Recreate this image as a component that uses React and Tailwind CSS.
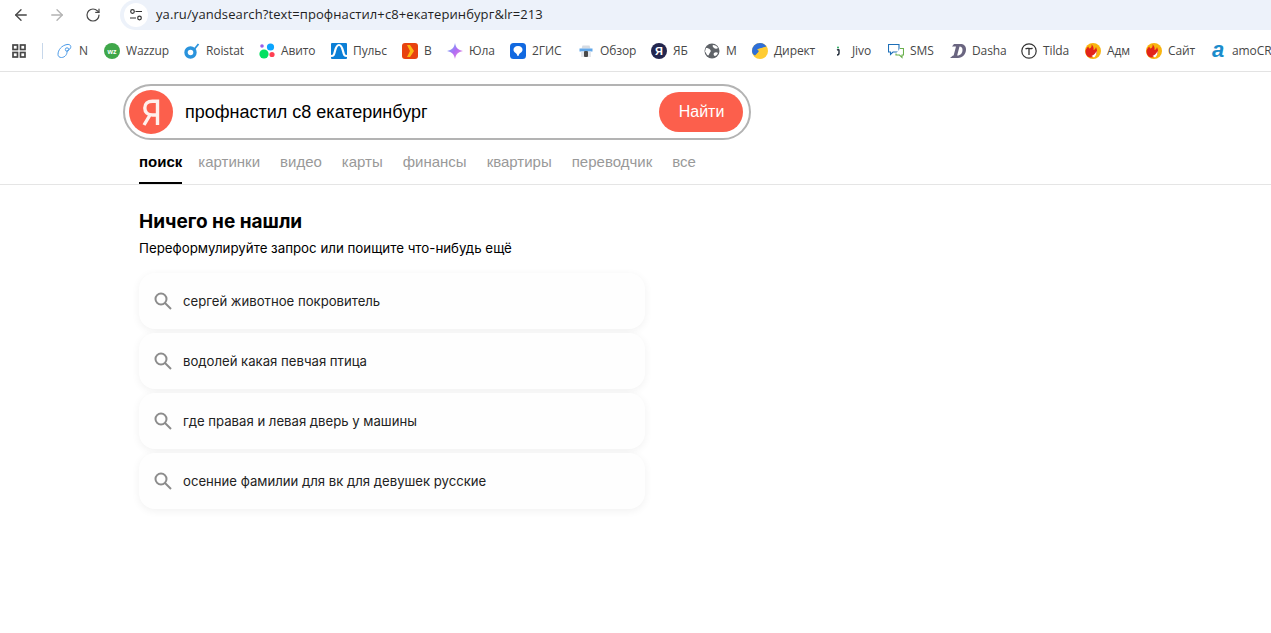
import React from 'react';
import { ArrowLeft, ArrowRight, RotateCw } from 'lucide-react';

const G = ({ children }) => (
  <svg width="16" height="16" viewBox="0 0 16 16" className="shrink-0">{children}</svg>
);

const FireIcon = () => (
  <G>
    <circle cx="8" cy="8" r="8" fill="#f9b50f" />
    <path d="M0.500 8c.500-2 1.500-3.500 3-4.500 0 2 1 2.500 2 1.500 1-1 1.500-2.500 1-4 1.500 2 2.500 3.500 2 6 1 0 2-1 2.500-3 1.500 3 1.500 6-.500 8.500-2 2-5 2.500-7 1.500C1.500 13 .300 10.500 .500 8z" fill="#e2231a" />
    <path d="M6.500 13c2-.500 4-2.500 5-5 .300 2.500-.500 5-2.500 6.500z" fill="#fff" />
  </G>
);

const bookmarks = [
  { label: 'N', w: 'w-[47px]', icon: (
    <G>
      <path d="M1 11.500C1 7 4.500 2.500 10 1.500c3-.500 4.500 1.500 3.500 3.500-.800 1.700-2.500 2-3.500 3 .500 3-2 6.500-5.500 6.500C2.500 14.500 1 13.500 1 11.500z" fill="none" stroke="#4c9be8" strokeWidth="1" />
      <circle cx="10" cy="6.500" r="1.700" fill="none" stroke="#4c9be8" strokeWidth="1" />
    </G>
  ) },
  { label: 'Wazzup', w: 'w-[80px]', icon: (
    <G>
      <circle cx="8" cy="8" r="8" fill="#3fa74a" />
      <text x="8" y="10.500" textAnchor="middle" fontSize="7" fontWeight="700" fill="#fff" fontFamily="Liberation Sans, sans-serif">wz</text>
    </G>
  ) },
  { label: 'Roistat', w: 'w-[75px]', icon: (
    <G>
      <circle cx="6.500" cy="9.500" r="4.500" fill="none" stroke="#2a93dc" strokeWidth="3.400" />
      <path d="M10.500 6l4-5" stroke="#2a93dc" strokeWidth="1.800" />
    </G>
  ) },
  { label: 'Авито', w: 'w-[72px]', icon: (
    <G>
      <circle cx="3" cy="3" r="1.800" fill="#965eeb" />
      <circle cx="11.500" cy="4" r="3.600" fill="#0aa5ff" />
      <circle cx="5" cy="11" r="4.600" fill="#04e061" />
      <circle cx="13" cy="11.500" r="2.600" fill="#ff4053" />
    </G>
  ) },
  { label: 'Пульс', w: 'w-[71px]', icon: (
    <G>
      <rect width="16" height="16" rx="1" fill="#0b7fd6" />
      <path d="M0 13c3 0 3-1 4-5 1-4 2-6 4-6s3 2 4 6c1 4 1 5 4 5" fill="none" stroke="#fff" strokeWidth="2.200" />
    </G>
  ) },
  { label: 'В', w: 'w-[45px]', icon: (
    <G>
      <rect width="16" height="16" rx="3" fill="#e8420f" />
      <path d="M5 2h3l4 6-4 6H5l3-6z" fill="#fdb813" />
    </G>
  ) },
  { label: 'Юла', w: 'w-[63px]', icon: (
    <G>
      <defs>
        <linearGradient id="ula" x1="0" y1="0" x2="1" y2="1">
          <stop offset="0" stopColor="#58c8f5" />
          <stop offset="0.500" stopColor="#b06cf5" />
          <stop offset="1" stopColor="#f78ad0" />
        </linearGradient>
      </defs>
      <path d="M8 0c1 5 3 7 8 8-5 1-7 3-8 8-1-5-3-7-8-8 5-1 7-3 8-8z" fill="url(#ula)" />
    </G>
  ) },
  { label: '2ГИС', w: 'w-[68px]', icon: (
    <G>
      <rect width="16" height="16" rx="3.500" fill="#1269e0" />
      <path d="M8 3c3 0 4.500 1.800 4.500 3.800 0 3-3.500 3-4 6.200h-1C7 9.800 3.500 9.800 3.500 6.800 3.500 4.800 5 3 8 3z" fill="#fff" />
    </G>
  ) },
  { label: 'Обзор', w: 'w-[73px]', icon: (
    <G>
      <path d="M3.500 5.500l1-3h7l1 3z" fill="#d5dbe3" />
      <rect x="1.500" y="5.500" width="13" height="3" fill="#62a8ea" />
      <rect x="3" y="8.500" width="10" height="5.500" fill="#e4e7ec" />
      <rect x="6" y="8" width="4" height="6" rx="1" fill="#4a4a4a" />
    </G>
  ) },
  { label: 'ЯБ', w: 'w-[53px]', icon: (
    <G>
      <circle cx="8" cy="8" r="8" fill="#23264e" />
      <text x="8" y="12" textAnchor="middle" fontSize="11" fontWeight="700" fill="#fff" fontFamily="Liberation Sans, sans-serif">Я</text>
    </G>
  ) },
  { label: 'М', w: 'w-[48px]', icon: (
    <G>
      <circle cx="8" cy="8" r="7.500" fill="#5f6368" />
      <path d="M2 5c2 0 3 .500 4 1.500s1 2 0 3-1 3-2 3-2-3-3-4zM9 2c2 0 4 1 5 3-1 1-3 1-4 0s-2-2-1-3zM10 10c1-1 3-1 4 0-1 2-2 3-3 3s-2-2-1-3z" fill="#fff" />
    </G>
  ) },
  { label: 'Директ', w: 'w-[78px]', icon: (
    <G>
      <circle cx="8" cy="8" r="8" fill="#fc3" />
      <path d="M0 8a8 8 0 0 1 8-8c3 0 5 1.500 6.500 3.500L6 6l1.500 2L3 12.500C1 12 0 10 0 8z" fill="#2f6fd8" />
      <path d="M14 4L5 6.500l2 1.500-3.500 6 1.500 1 5-5 1.500 1.500z" fill="#fc3" />
    </G>
  ) },
  { label: 'Jivo', w: 'w-[58px]', icon: (
    <G>
      <circle cx="8" cy="8" r="8" fill="#fff" />
      <circle cx="8" cy="4.500" r="1" fill="#26a65b" />
      <path d="M7 7c1-.500 2-.500 2 0v3c0 1.500-1 2-2 2" fill="none" stroke="#1f2937" strokeWidth="1.400" />
    </G>
  ) },
  { label: 'SMS', w: 'w-[62px]', icon: (
    <G>
      <path d="M.500 1.500h10.500v7.500H5l-2.500 2.500V9h-2z" fill="#fff" stroke="#1d6fb8" strokeWidth="1.100" />
      <path d="M12 5.500h3.500V12H14v2.500L11.500 12H8v-1.500" fill="#fff" stroke="#6ab04c" strokeWidth="1.100" />
    </G>
  ) },
  { label: 'Dasha', w: 'w-[71px]', icon: (
    <G>
      <path d="M4 1h6c4 0 6 2 6 5.500C16 11 12.500 15 8 15H0l3-2.500h4.500c3 0 5-2.500 5-5.500 0-2-1-3.500-3-3.500L7 13H3.500L6 3.500H2z" fill="#6a6580" />
    </G>
  ) },
  { label: 'Tilda', w: 'w-[64px]', icon: (
    <G>
      <circle cx="8" cy="8" r="7.200" fill="#fff" stroke="#333" strokeWidth="1.200" />
      <path d="M4.500 6c1-1 1.500-1 3.500-.500s2.500.500 3.500-.500M8 6v6" fill="none" stroke="#333" strokeWidth="1.300" />
    </G>
  ) },
  { label: 'Адм', w: 'w-[61px]', icon: <FireIcon /> },
  { label: 'Сайт', w: 'w-[64px]', icon: <FireIcon /> },
  { label: 'amoCR', w: 'w-[61px]', icon: (
    <G>
      <text x="8" y="14" textAnchor="middle" fontSize="22" fontWeight="700" fontStyle="italic" fill="#1b8ccb" fontFamily="Liberation Sans, sans-serif">a</text>
    </G>
  ) },
];

const tabs = ['картинки', 'видео', 'карты', 'финансы', 'квартиры', 'переводчик', 'все'];

const suggestions = [
  'сергей животное покровитель',
  'водолей какая певчая птица',
  'где правая и левая дверь у машины',
  'осенние фамилии для вк для девушек русские',
];

const App = () => {
  return (
    <div className="h-[633px] w-[1271px] overflow-hidden bg-white font-['Liberation_Sans',sans-serif]">
      {/* Панель браузера */}
      <div className="flex h-[30px] items-center bg-white pl-[12px]">
        <ArrowLeft size={18} strokeWidth={1.8} className="text-[#474747]" />
        <ArrowRight size={18} strokeWidth={1.8} className="ml-[18px] text-[#b3b3b3]" />
        <RotateCw size={16} strokeWidth={1.8} className="ml-[19px] text-[#474747]" />
        <div className="ml-[19px] flex h-[30px] flex-1 items-center rounded-l-full bg-[#edf2fa] pl-[4px]">
          <div className="flex h-[24px] w-[24px] items-center justify-center rounded-full bg-white">
            <svg width="14" height="14" viewBox="0 0 14 14" fill="none" stroke="#333" strokeWidth="1.200">
              <circle cx="3.500" cy="3.500" r="1.800" />
              <path d="M6.500 3.500H13M1 10h6" />
              <circle cx="10.500" cy="10" r="1.800" />
            </svg>
          </div>
          <span className="ml-[8px] font-['Open_Sans',sans-serif] text-[13px] tracking-[0.1px] text-[#1f1f1f]">
            ya.ru/yandsearch?text=профнастил+с8+екатеринбург&lr=213
          </span>
        </div>
      </div>

      {/* Закладки */}
      <div className="flex h-[42px] items-center overflow-hidden border-b border-[#e3e3e3] pl-[12px]">
        <svg width="14" height="14" viewBox="0 0 14 14" fill="none" stroke="#474747" strokeWidth="1.700" className="shrink-0">
          <rect x="1" y="1" width="4.500" height="4.500" />
          <rect x="8.500" y="1" width="4.500" height="4.500" />
          <rect x="1" y="8.500" width="4.500" height="4.500" />
          <rect x="8.500" y="8.500" width="4.500" height="4.500" />
        </svg>
        <div className="ml-[16px] mr-[14px] h-[16px] w-px shrink-0 bg-[#c7d7ea]" />
        {bookmarks.map((b) => (
          <div key={b.label} className={`flex shrink-0 items-center gap-[6px] ${b.w}`}>
            {b.icon}
            <span className="whitespace-nowrap font-['Open_Sans',sans-serif] text-[12px] tracking-[-0.1px] text-[#474747]">{b.label}</span>
          </div>
        ))}
      </div>

      {/* Поиск */}
      <div className="pl-[123px] pt-[12px]">
        <div className="flex h-[56px] w-[628px] items-center rounded-full border-[2px] border-[#b3b3b3] bg-white pl-[4px] pr-[6px]">
          <div className="flex h-[44px] w-[44px] items-center justify-center rounded-full bg-[#fc5f4c]">
            <svg width="20" height="28" viewBox="0 0 20 28" fill="none" stroke="#fff0ec" strokeWidth="3.400">
              <path d="M16.500 27V3.200h-5C6.500 3.200 3.800 6 3.800 10c0 4.200 2.700 7 7.700 7h5M9 17L3 27" />
            </svg>
          </div>
          <span className="ml-[12px] flex-1 text-[18px] text-black">профнастил с8 екатеринбург</span>
          <div className="flex h-[40px] w-[84px] items-center justify-center rounded-full bg-[#fc5f4c] pl-[1px] text-[16px] text-white">
            Найти
          </div>
        </div>
      </div>

      {/* Вкладки */}
      <div className="flex h-[45px] items-start gap-[20px] border-b border-[#e5e5e5] pl-[139px]">
        <div className="-mr-[4px] flex h-[44px] flex-col justify-center border-b-2 border-black pt-[2px] text-[15px] font-bold text-black">поиск</div>
        {tabs.map((t) => (
          <div key={t} className="flex h-[44px] items-center pt-[1px] text-[15px] text-[#999]">{t}</div>
        ))}
      </div>

      {/* Результат */}
      <div className="ml-[139px] w-[506px] pt-[25px]">
        <h1 className="font-['Inter',sans-serif] text-[19px] font-bold leading-[24px] text-black">Ничего не нашли</h1>
        <p className="mt-[5px] font-['Inter',sans-serif] text-[13.3px] leading-[18px] text-black">
          Переформулируйте запрос или поищите что-нибудь ещё
        </p>
        <div className="mt-[16px] flex flex-col gap-[4px]">
          {suggestions.map((s) => (
            <div
              key={s}
              className="flex h-[56px] items-center gap-[11px] rounded-[16px] bg-[#fefefe] pl-[15px] shadow-[0_2px_8px_rgba(0,0,0,0.06)]"
            >
              <svg width="18" height="18" viewBox="0 0 18 18" fill="none" stroke="#8c8c8c" strokeWidth="2">
                <circle cx="7" cy="7" r="5.500" />
                <path d="M11 11l6 6" />
              </svg>
              <span className="pt-[2px] font-['Inter',sans-serif] text-[13.15px] text-[#222]">{s}</span>
            </div>
          ))}
        </div>
      </div>
    </div>
  );
};

export default App;
